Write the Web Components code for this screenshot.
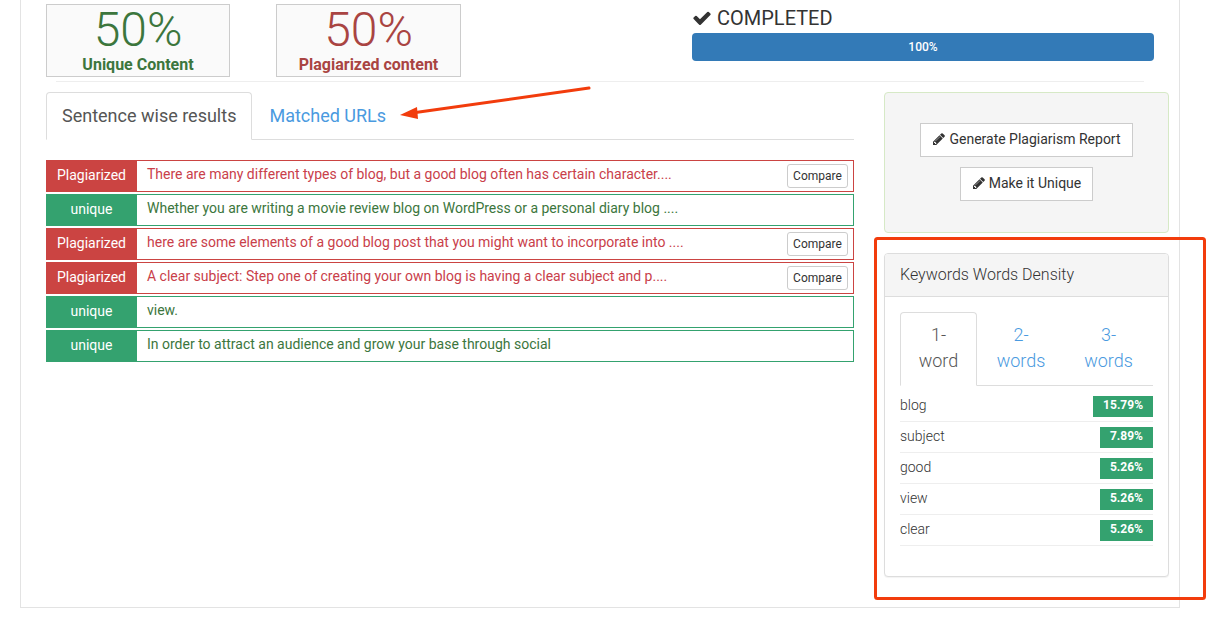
<!DOCTYPE html>
<html>
<head>
<meta charset="utf-8">
<title>Plagiarism results</title>
<style>
    html, body { margin: 0; padding: 0; background: #fff; }
    body { font-family: Roboto, "Liberation Sans", sans-serif; font-size: 14px; color: #333; overflow: hidden; }
</style>
</head>
<body>
<report-page>
    <stat-box slot="stats" value="50%" caption="Unique Content" tone="#3c763d" style="width:184px"></stat-box>
    <stat-box slot="stats" value="50%" caption="Plagiarized content" tone="#a94442" style="width:185px"></stat-box>
    <progress-status slot="progress"></progress-status>

    <tab-bar slot="main" active="Sentence wise results" others="Matched URLs"></tab-bar>
    <result-row slot="main" kind="plagiarized" compare>There are many different types of blog, but a good blog often has certain character....</result-row>
    <result-row slot="main" kind="unique">Whether you are writing a movie review blog on WordPress or a personal diary blog ....</result-row>
    <result-row slot="main" kind="plagiarized" compare>here are some elements of a good blog post that you might want to incorporate into ....</result-row>
    <result-row slot="main" kind="plagiarized" compare>A clear subject: Step one of creating your own blog is having a clear subject and p....</result-row>
    <result-row slot="main" kind="unique">view.</result-row>
    <result-row slot="main" kind="unique">In order to attract an audience and grow your base through social</result-row>

    <action-well slot="side">
        <icon-button>Generate Plagiarism Report</icon-button>
        <icon-button>Make it Unique</icon-button>
    </action-well>
    <density-panel slot="side" title="Keywords Words Density">
        <keyword-row word="blog" pct="15.79%"></keyword-row>
        <keyword-row word="subject" pct="7.89%"></keyword-row>
        <keyword-row word="good" pct="5.26%"></keyword-row>
        <keyword-row word="view" pct="5.26%"></keyword-row>
        <keyword-row word="clear" pct="5.26%"></keyword-row>
    </density-panel>
</report-page>
<markup-layer></markup-layer>

<script>
const PENCIL = 'M491 1536l91-91-235-235-91 91v107h128v128h107zm523-928q0-22-22-22-10 0-17 7l-542 542q-7 7-7 17 0 22 22 22 10 0 17-7l542-542q7-7 7-17zm-54-192l416 416-832 832h-416v-416zm683 96q0 53-37 90l-166 166-416-416 166-165q36-38 90-38 53 0 91 38l235 234q37 39 37 91z';
const CHECK = 'M1671 566q0 40-28 68l-724 724-136 136q-28 28-68 28t-68-28l-136-136-362-362q-28-28-28-68t28-68l136-136q28-28 68-28t68 28l294 295 656-657q28-28 68-28t68 28l136 136q28 28 28 68z';

class ReportPage extends HTMLElement {
    constructor() {
        super();
        this.attachShadow({ mode: 'open' }).innerHTML = `
            <style>
                :host {
                    display: block;
                    box-sizing: border-box;
                    width: 1160px;
                    height: 608px;
                    margin-left: 20px;
                    padding: 4px 0 0 25px;
                    border: 1px solid #e3e3e3;
                    border-top: 0;
                }
                .top { display: flex; height: 73px; }
                .stats { display: flex; gap: 46px; }
                .progress { margin-left: 231px; width: 462px; }
                hr { border: 0; border-top: 1px solid #eee; margin: 4px 35px 0 10px; }
                .cols { display: flex; margin-top: 10px; }
                .main { width: 808px; }
                .side { width: 285px; margin-left: 30px; }
            </style>
            <div class="top">
                <div class="stats"><slot name="stats"></slot></div>
                <div class="progress"><slot name="progress"></slot></div>
            </div>
            <hr>
            <div class="cols">
                <div class="main"><slot name="main"></slot></div>
                <div class="side"><slot name="side"></slot></div>
            </div>
        `;
    }
}
customElements.define('report-page', ReportPage);

class StatBox extends HTMLElement {
    connectedCallback() {
        const tone = this.getAttribute('tone');
        this.attachShadow({ mode: 'open' }).innerHTML = `
            <style>
                :host {
                    display: block;
                    box-sizing: border-box;
                    height: 73px;
                    border: 1px solid #ccc;
                    background: #fafafa;
                    text-align: center;
                    color: ${tone};
                }
                .value { font-size: 48px; font-weight: 300; line-height: 50px; margin-top: 0; }
                .caption { font-size: 16px; font-weight: 700; line-height: 20px; }
            </style>
            <div class="value">${this.getAttribute('value')}</div>
            <div class="caption">${this.getAttribute('caption')}</div>
        `;
    }
}
customElements.define('stat-box', StatBox);

class ProgressStatus extends HTMLElement {
    constructor() {
        super();
        this.attachShadow({ mode: 'open' }).innerHTML = `
            <style>
                :host { display: block; }
                .head { display: flex; align-items: center; gap: 5px; height: 29px; padding-bottom: 2px; box-sizing: border-box; font-size: 20px; color: #333; }
                svg { width: 20px; height: 20px; fill: #333; }
                .bar {
                    height: 28px;
                    border-radius: 4px;
                    background: #337ab7;
                    color: #fff;
                    font-size: 12px;
                    font-weight: 500;
                    line-height: 28px;
                    text-align: center;
                }
            </style>
            <div class="head"><svg viewBox="0 0 1792 1792"><path d="${CHECK}"/></svg>COMPLETED</div>
            <div class="bar">100%</div>
        `;
    }
}
customElements.define('progress-status', ProgressStatus);

class TabBar extends HTMLElement {
    connectedCallback() {
        this.attachShadow({ mode: 'open' }).innerHTML = `
            <style>
                :host {
                    display: flex;
                    height: 48px;
                    box-sizing: border-box;
                    border-bottom: 1px solid #ddd;
                    margin-bottom: 20px;
                    font-size: 18px;
                }
                div { box-sizing: border-box; height: 48px; padding: 0 15px; line-height: 45px; border: 1px solid transparent; }
                .on { color: #555; background: #fff; border-color: #ddd; border-bottom-color: #fff; border-radius: 4px 4px 0 0; }
                .off { color: #4a9ae0; padding-left: 16px; }
            </style>
            <div class="on">${this.getAttribute('active')}</div>
            <div class="off">${this.getAttribute('others')}</div>
        `;
    }
}
customElements.define('tab-bar', TabBar);

class ResultRow extends HTMLElement {
    connectedCallback() {
        const bad = this.getAttribute('kind') === 'plagiarized';
        const button = this.hasAttribute('compare') ? '<button>Compare</button>' : '';
        this.attachShadow({ mode: 'open' }).innerHTML = `
            <style>
                :host {
                    display: flex;
                    box-sizing: border-box;
                    height: 32px;
                    margin-bottom: 2px;
                    border: 1px solid ${bad ? '#cb4442' : '#34a26f'};
                }
                .label {
                    flex: none;
                    width: 91px;
                    margin: -1px 0 -1px -1px;
                    background: ${bad ? '#cb4442' : '#34a26f'};
                    color: #fff;
                    text-align: center;
                    line-height: 30px;
                }
                .text {
                    flex: 1;
                    padding-left: 10px;
                    line-height: 26px;
                    color: ${bad ? '#c9404a' : '#3c763d'};
                    white-space: nowrap;
                    overflow: hidden;
                }
                button {
                    flex: none;
                    align-self: center;
                    box-sizing: border-box;
                    width: 61px;
                    height: 24px;
                    margin-right: 5px;
                    padding: 0;
                    font: 12px Roboto, sans-serif;
                    color: #333;
                    background: #fff;
                    border: 1px solid #ccc;
                    border-radius: 3px;
                }
            </style>
            <div class="label">${bad ? 'Plagiarized' : 'unique'}</div>
            <div class="text"><slot></slot></div>
            ${button}
        `;
    }
}
customElements.define('result-row', ResultRow);

class ActionWell extends HTMLElement {
    constructor() {
        super();
        this.attachShadow({ mode: 'open' }).innerHTML = `
            <style>
                :host {
                    display: flex;
                    flex-direction: column;
                    align-items: center;
                    gap: 10px;
                    box-sizing: border-box;
                    height: 141px;
                    padding-top: 30px;
                    margin-bottom: 20px;
                    background: #f5f5f5;
                    border: 1px solid #d6e9c6;
                    border-radius: 4px;
                }
            </style>
            <slot></slot>
        `;
    }
}
customElements.define('action-well', ActionWell);

class IconButton extends HTMLElement {
    constructor() {
        super();
        this.attachShadow({ mode: 'open' }).innerHTML = `
            <style>
                :host {
                    display: flex;
                    align-items: center;
                    gap: 3px;
                    box-sizing: border-box;
                    height: 34px;
                    padding: 0 11px 2px 11px;
                    background: #fff;
                    border: 1px solid #ccc;
                    color: #333;
                    font-size: 14px;
                    white-space: nowrap;
                }
                svg { width: 14px; height: 14px; fill: #333; }
            </style>
            <svg viewBox="0 0 1792 1792"><path d="${PENCIL}"/></svg><slot></slot>
        `;
    }
}
customElements.define('icon-button', IconButton);

class DensityPanel extends HTMLElement {
    connectedCallback() {
        this.attachShadow({ mode: 'open' }).innerHTML = `
            <style>
                :host {
                    display: block;
                    box-sizing: border-box;
                    height: 324px;
                    border: 1px solid #ddd;
                    border-radius: 4px;
                    box-shadow: 0 1px 1px rgba(0, 0, 0, .05);
                    background: #fff;
                }
                .title {
                    box-sizing: border-box;
                    height: 43px;
                    padding: 0 15px;
                    line-height: 42px;
                    font-size: 16px;
                    font-weight: 300;
                    color: #333;
                    background: #f5f5f5;
                    border-bottom: 1px solid #ddd;
                    border-radius: 3px 3px 0 0;
                }
                .body { padding: 15px 15px 0; }
                .tabs { display: flex; height: 74px; box-sizing: border-box; border-bottom: 1px solid #ddd; font-size: 18px; line-height: 26px; text-align: center; }
                .tabs div { box-sizing: border-box; height: 74px; padding-top: 9px; border: 1px solid transparent; color: #4a9ae0; font-weight: 300; }
                .tabs .on { width: 77px; color: #555; background: #fff; border-color: #ddd; border-bottom-color: #fff; border-radius: 4px 4px 0 0; }
            </style>
            <div class="title">${this.getAttribute('title')}</div>
            <div class="body">
                <div class="tabs">
                    <div class="on">1-<br>word</div>
                    <div style="width:88px">2-<br>words</div>
                    <div style="width:87px">3-<br>words</div>
                </div>
                <slot></slot>
            </div>
        `;
    }
}
customElements.define('density-panel', DensityPanel);

class KeywordRow extends HTMLElement {
    connectedCallback() {
        this.attachShadow({ mode: 'open' }).innerHTML = `
            <style>
                :host {
                    display: flex;
                    justify-content: space-between;
                    box-sizing: border-box;
                    height: 31px;
                    padding-top: 4px;
                    border-bottom: 1px solid #eee;
                    font-size: 14px;
                    font-weight: 300;
                    color: #333;
                    line-height: 20px;
                }
                :host(:first-of-type) { height: 36px; padding-top: 9px; }
                .pct {
                    height: 21px;
                    padding: 0 10px;
                    margin-top: 1px;
                    background: #34a26f;
                    color: #fff;
                    font-size: 12px;
                    font-weight: 700;
                    line-height: 19px;
                }
            </style>
            <span>${this.getAttribute('word')}</span>
            <span class="pct">${this.getAttribute('pct')}</span>
        `;
    }
}
customElements.define('keyword-row', KeywordRow);

// hand-drawn callouts from the screenshot, these sit over the page
class MarkupLayer extends HTMLElement {
    constructor() {
        super();
        this.attachShadow({ mode: 'open' }).innerHTML = `
            <style>
                :host { position: absolute; left: 0; top: 0; width: 1222px; height: 629px; pointer-events: none; }
                svg { position: absolute; left: 0; top: 0; }
            </style>
            <svg width="1222" height="629" viewBox="0 0 1222 629">
                <rect x="875.5" y="238.5" width="329" height="360" rx="2" fill="none" stroke="#f23c0c" stroke-width="3"/>
                <line x1="589" y1="88" x2="412" y2="113" stroke="#f23c0c" stroke-width="3" stroke-linecap="round"/>
                <path d="M400 115L417 107L418 119Z" fill="#f23c0c"/>
            </svg>
        `;
    }
}
customElements.define('markup-layer', MarkupLayer);
</script>
</body>
</html>
